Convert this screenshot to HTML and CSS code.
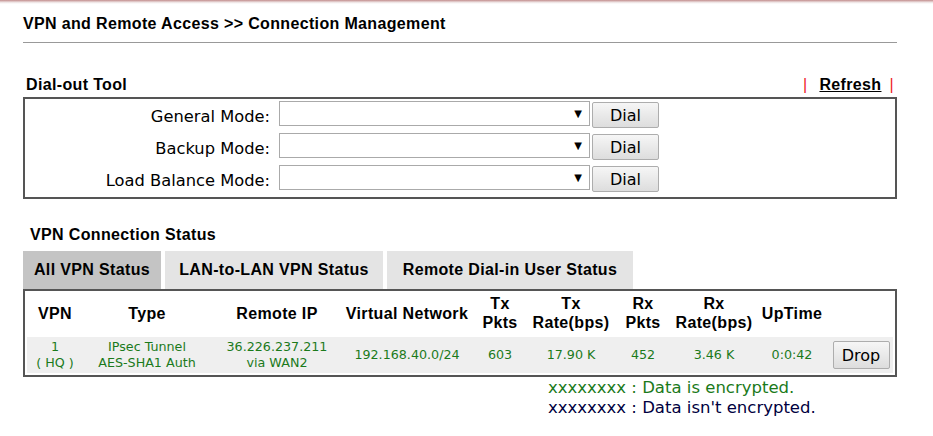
FILE: index.html
```html
<!DOCTYPE html>
<html lang="en">
<head>
  <meta charset="UTF-8">
  <title>Connection Management</title>
  <link rel="stylesheet" href="styles.css">
</head>
<body>
  <div class="franja"></div>

  <div class="pagina">
    <h1 class="titulo">VPN and Remote Access &gt;&gt; Connection Management</h1>

    <!-- Dial-out -->
    <div class="cabecera">
      <h2>Dial-out Tool</h2>
      <div class="enlaces">
        <span class="barra">|</span>
        <a href="#">Refresh</a>
        <span class="barra">|</span>
      </div>
    </div>
    <div class="caja marcado">
      <label>General Mode:</label>
      <div class="selector"><span class="flecha">&#9660;</span></div>
      <button class="boton">Dial</button>

      <label>Backup Mode:</label>
      <div class="selector"><span class="flecha">&#9660;</span></div>
      <button class="boton">Dial</button>

      <label>Load Balance Mode:</label>
      <div class="selector"><span class="flecha">&#9660;</span></div>
      <button class="boton">Dial</button>
    </div>

    <!-- Estado VPN -->
    <h2 class="subtitulo">VPN Connection Status</h2>
    <div class="pestanas">
      <div class="pestana activa">All VPN Status</div>
      <div class="pestana lan">LAN-to-LAN VPN Status</div>
      <div class="pestana remota">Remote Dial-in User Status</div>
    </div>
    <div class="caja tabla-caja">
      <table class="estado">
        <colgroup>
          <col style="width:56px">
          <col style="width:128px">
          <col style="width:132px">
          <col style="width:128px">
          <col style="width:58px">
          <col style="width:84px">
          <col style="width:60px">
          <col style="width:82px">
          <col style="width:74px">
          <col style="width:64px">
        </colgroup>
        <tr>
          <th>VPN</th>
          <th>Type</th>
          <th>Remote IP</th>
          <th>Virtual Network</th>
          <th>Tx<br>Pkts</th>
          <th>Tx<br>Rate(bps)</th>
          <th>Rx<br>Pkts</th>
          <th>Rx<br>Rate(bps)</th>
          <th>UpTime</th>
          <th></th>
        </tr>
        <tr class="fila">
          <td>1<br>( HQ )</td>
          <td>IPsec Tunnel<br>AES-SHA1 Auth</td>
          <td>36.226.237.211<br>via WAN2</td>
          <td>192.168.40.0/24</td>
          <td>603</td>
          <td>17.90 K</td>
          <td>452</td>
          <td>3.46 K</td>
          <td>0:0:42</td>
          <td><button class="boton drop">Drop</button></td>
        </tr>
      </table>
    </div>

    <div class="leyenda">
      <div class="cifrado">xxxxxxxx : Data is encrypted.</div>
      <div class="plano">xxxxxxxx : Data isn't encrypted.</div>
    </div>
  </div>
</body>
</html>
```

FILE: styles.css
```css
* {
  box-sizing: border-box;
}

body {
  margin: 0;
  background-color: white;
  font-family: "DejaVu Sans", sans-serif;
  color: #000;
}

.franja {
  height: 4px;
  background: linear-gradient(#c28c8c, #dcc0c0, #f2ecec, #fff);
}

.pagina {
  width: 874px;
  margin-left: 23px;
}

h1, h2 {
  font-family: "Liberation Sans", Arial, sans-serif;
  font-size: 16px;
  letter-spacing: 0.35px;
  font-weight: bold;
  margin: 0;
}

.titulo {
  line-height: 20px;
  padding-top: 10px;
  padding-bottom: 8px;
  border-bottom: 1px solid #999;
}

.cabecera {
  display: flex;
  justify-content: space-between;
  align-items: center;
  margin-top: 30px;
  height: 24px;
  padding-left: 3px;
}

.enlaces {
  display: flex;
  align-items: center;
  font-family: "Liberation Sans", Arial, sans-serif;
  font-size: 16px;
  letter-spacing: 0.35px;
  font-weight: bold;
  padding-right: 3px;
}

.enlaces a {
  color: #000;
  margin: 0 8px 0 12px;
}

.barra {
  color: #ee1c24;
  font-weight: normal;
}

.caja {
  border: 2px solid #555;
}

.marcado {
  display: grid;
  grid-template-columns: 252px 311px 67px;
  grid-auto-rows: 32px;
  column-gap: 2px;
  align-items: start;
  padding-top: 2px;
}

.marcado label {
  text-align: right;
  font-size: 16.3px;
  line-height: 25px;
  padding-top: 3px;
  padding-right: 7px;
}

.selector {
  height: 25px;
  border: 1px solid #aaa;
  position: relative;
  background: white;
}

.flecha {
  position: absolute;
  right: 7px;
  top: 6px;
  font-size: 10px;
}

.boton {
  height: 26px;
  margin-top: 1px;
  border: 1px solid #adadad;
  border-radius: 2px;
  background: linear-gradient(#f6f6f6, #dddddd);
  font-family: "DejaVu Sans", sans-serif;
  font-size: 16px;
  padding: 0;
  color: #000;
}

.subtitulo {
  margin-top: 26px;
  line-height: 20px;
  padding-left: 7px;
  height: 26px;
}

.pestanas {
  display: flex;
  gap: 4px;
}

.pestana {
  width: 218px;
  height: 38px;
  line-height: 38px;
  background-color: #e4e4e4;
  font-family: "Liberation Sans", Arial, sans-serif;
  font-size: 16px;
  letter-spacing: 0.35px;
  font-weight: bold;
  text-align: center;
}

.pestana.activa {
  width: 138px;
  background-color: #c4c4c4;
}

.pestana.remota {
  width: 246px;
}

.tabla-caja {
  padding: 2px;
}

.estado {
  table-layout: fixed;
  border-collapse: collapse;
  width: 866px;
}

.estado th {
  font-family: "Liberation Sans", Arial, sans-serif;
  font-size: 16px;
  letter-spacing: 0.35px;
  line-height: 19px;
  height: 44px;
  padding: 0 0 4px 0;
  text-align: center;
}

.fila {
  background-color: #efefef;
}

.fila td {
  font-size: 12.7px;
  line-height: 16px;
  color: #1b7a1b;
  text-align: center;
  height: 36px;
  padding: 2px 0;
}

.drop {
  width: 57px;
  height: 28px;
  margin: 0;
}

.leyenda {
  margin-left: 525px;
  margin-top: 1px;
  font-size: 16.5px;
  line-height: 20px;
}

.cifrado {
  color: #1b7a1b;
}

.plano {
  color: #000040;
}
```
